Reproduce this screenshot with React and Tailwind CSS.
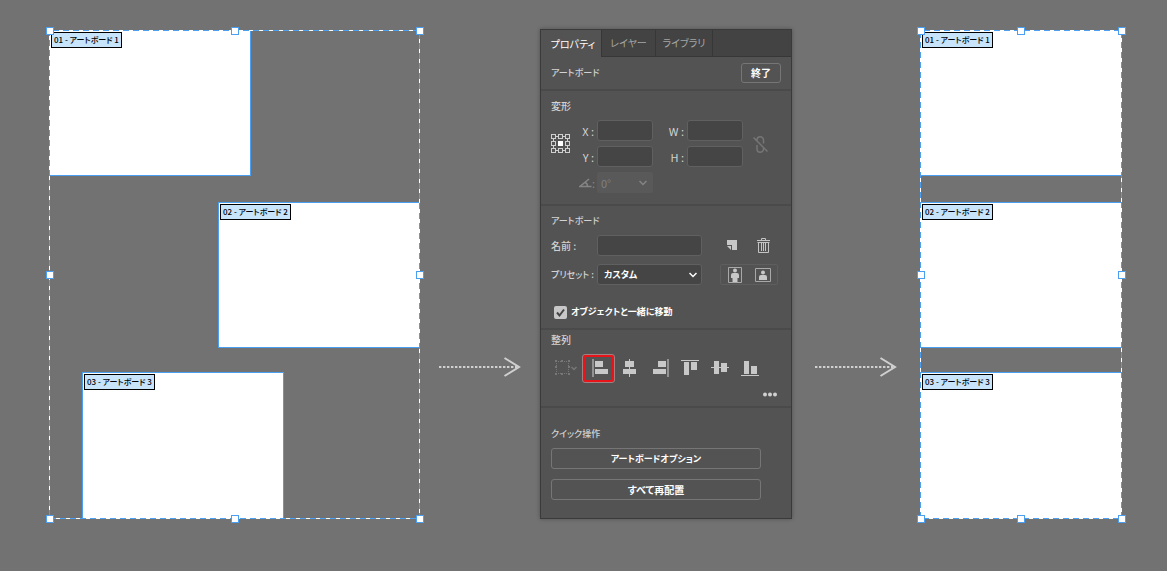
import React from "react";

const LEFT_BOARDS = [
  { label: "01 - アートボード 1", place: "left-0 top-0 h-[146px] w-[202px]", edge: "border-r border-b" },
  { label: "02 - アートボード 2", place: "right-0 top-[172px] h-[146px] w-[202px]", edge: "border-l border-y" },
  { label: "03 - アートボード 3", place: "left-[33px] top-[342px] h-[147px] w-[202px]", edge: "border-x border-t" },
];

const RIGHT_BOARDS = [
  { label: "01 - アートボード 1", place: "inset-x-0 top-0 h-[146px]", edge: "border-b" },
  { label: "02 - アートボード 2", place: "inset-x-0 top-[172px] h-[146px]", edge: "border-y" },
  { label: "03 - アートボード 3", place: "inset-x-0 top-[342px] h-[147px]", edge: "border-t" },
];

const HANDLES = [
  "-left-[3px] -top-[3px]",
  "left-1/2 -ml-1 -top-[3px]",
  "-right-1 -top-[3px]",
  "-left-[3px] top-1/2 -mt-1",
  "-right-1 top-1/2 -mt-1",
  "-left-[3px] -bottom-1",
  "left-1/2 -ml-1 -bottom-1",
  "-right-1 -bottom-1",
];

function Canvas({ boards }) {
  return (
    <div className="relative mt-px">
      {boards.map((b) => (
        <div key={b.label} className={`absolute bg-white border-[#4a9ff0] ${b.place} ${b.edge}`} />
      ))}
      <svg className="absolute inset-0 h-full w-full overflow-hidden" fill="none" strokeWidth="2">
        <rect width="100%" height="100%" stroke="#4a9ff0" />
        <rect width="100%" height="100%" stroke="#fff" strokeDasharray="4 6" />
      </svg>
      {boards.map((b) => (
        <div key={b.label} className={`absolute ${b.place}`}>
          <span className="absolute left-[2px] top-[2px] flex h-4 w-[71px] items-center justify-center whitespace-nowrap border border-black bg-[#c8e4fb] text-[8px] font-medium leading-none text-black">
            {b.label}
          </span>
        </div>
      ))}
      {HANDLES.map((h) => (
        <span key={h} className={`absolute size-2 border border-[#4a9ff0] bg-white ${h}`} />
      ))}
    </div>
  );
}

function Arrow() {
  return (
    <div className="flex justify-center pt-[328px]">
      <svg width="82" height="20" viewBox="0 0 82 20" fill="none" stroke="#d0d0d0" strokeWidth="2">
        <path d="M0 10H78" strokeDasharray="2.4 1.6" />
        <path d="M65.5 1 80 10 65.5 19" />
      </svg>
    </div>
  );
}

function Title({ kana, children }) {
  return (
    <h2 className={`font-medium leading-4 text-[#d2d2d2] ${kana ? "text-[9px]" : "text-[10px]"}`}>{children}</h2>
  );
}

function Field({ id, label }) {
  return (
    <div className="flex items-center">
      <label htmlFor={id} className="mr-[3px] text-[11px] leading-4 text-[#d2d2d2]">
        {label} :
      </label>
      <input
        id={id}
        type="text"
        className="h-[21px] w-14 rounded-[3px] border border-[#606060] bg-[#454545] px-1 text-[10px] text-white"
      />
    </div>
  );
}

function Chevron({ className }) {
  return (
    <svg width="8" height="6" viewBox="0 0 8 6" fill="none" stroke="currentColor" strokeWidth="1.5" className={className}>
      <path d="M.5 1 4 4.500 7.500 1" />
    </svg>
  );
}

function ReferencePoint() {
  return (
    <svg width="19" height="19" viewBox="0 0 19 19" fill="none" stroke="#cfcfcf">
      <path d="M5 2.500H7M12 2.500H14M5 16.500H7M12 16.500H14M2.500 5V7M2.500 12V14M16.500 5V7M16.500 12V14" />
      {[0.5, 7.5, 14.5].map((y) =>
        [0.5, 7.5, 14.5].map((x) =>
          x === 7.5 && y === 7.5 ? (
            <rect key="center" x="7.500" y="7.500" width="4" height="4" fill="#fff" stroke="#fff" />
          ) : (
            <rect key={`${x}-${y}`} x={x} y={y} width="4" height="4" />
          )
        )
      )}
    </svg>
  );
}

const ALIGN_BUTTONS = [
  {
    label: "左揃え",
    active: true,
    icon: (
      <>
        <path fill="#929292" d="M0 0h2v18H0z" />
        <path d="M3 2h8v6H3zM3 10h13v5H3z" />
      </>
    ),
  },
  {
    label: "水平方向中央揃え",
    icon: <path d="M8 0h1v18H8zM4 2h9v6H4zM2 10h13v5H2z" />,
  },
  {
    label: "右揃え",
    icon: (
      <>
        <path fill="#929292" d="M16 0h2v18h-2z" />
        <path d="M7 2h8v6H7zM2 10h13v5H2z" />
      </>
    ),
  },
  {
    label: "上揃え",
    icon: <path d="M0 1h18v1H0zM3 3h5v13H3zM10 3h6v8h-6z" />,
  },
  {
    label: "垂直方向中央揃え",
    icon: <path d="M0 8h18v1H0zM3 2h5v13H3zM10 4h6v9h-6z" />,
  },
  {
    label: "下揃え",
    icon: <path d="M0 16h18v1H0zM3 2h5v13H3zM10 7h6v8h-6z" />,
  },
];

function AlignTo() {
  return (
    <button aria-label="整列の基準" className="flex items-center text-[#777]">
      <svg width="23" height="16" viewBox="0 0 23 16" fill="none" stroke="currentColor">
        <path d="M3 1.500H12M3 13.500H12M1.500 3V12M13.500 3V12" strokeDasharray="1 1" />
        <path
          fill="currentColor"
          stroke="none"
          d="M0 0h2v2H0zM6 0h2v2H6zM13 0h2v2h-2zM0 6h2v2H0zM13 6h2v2h-2zM0 13h2v2H0zM6 13h2v2H6zM13 13h2v2h-2z"
        />
        <path d="M16.500 7 19 9.500 21.500 7" strokeWidth="1.500" />
      </svg>
    </button>
  );
}

function Panel() {
  return (
    <section className="border border-[#3a3a3a] bg-[#535353] shadow-[0_0_4px_rgba(0,0,0,0.3)]">
      <div role="tablist" className="flex h-[27px] bg-[#434343] text-[10px] leading-none text-[#a6a6a6]">
        <button role="tab" aria-selected="true" className="w-[61px] border-r border-[#373737] bg-[#535353] pl-1 text-white">
          プロパティ
        </button>
        <button role="tab" aria-selected="false" className="w-[54px] border-b border-r border-[#373737]">
          レイヤー
        </button>
        <button role="tab" aria-selected="false" className="w-[57px] border-b border-r border-[#373737]">
          ライブラリ
        </button>
        <div className="flex-1 border-b border-[#373737]" />
      </div>

      <div className="flex h-8 items-center justify-between px-[10px]">
        <Title kana>アートボード</Title>
        <button className="h-5 w-10 rounded-[3px] border border-[#767676] text-[10px] font-bold leading-none text-white">
          終了
        </button>
      </div>

      {/* 変形 */}
      <div className="h-[115px] border-t-2 border-[#4a4a4a] px-[10px] pt-[7px]">
        <Title>変形</Title>
        <div className="mt-[6px] flex items-start">
          <div className="mt-[14px] w-[19px]">
            <ReferencePoint />
          </div>
          <div className="flex w-[83px] flex-col items-end gap-[5px]">
            <Field id="x" label="X" />
            <Field id="y" label="Y" />
            <div className="flex items-center text-[#858585]">
              <label htmlFor="angle" className="mr-[2px] flex items-center text-[11px] leading-4">
                <svg width="13" height="10" viewBox="0 0 13 10" fill="none" stroke="currentColor" strokeWidth="1.500" aria-label="角度">
                  <path d="M10 1 1 8.500H12.500M6 4.500C8 5 8.500 6.500 8.500 8.500" />
                </svg>
                <span>:</span>
              </label>
              <div className="relative">
                <select
                  id="angle"
                  disabled
                  className="block h-[21px] w-14 appearance-none rounded-[2px] bg-[#595959] pl-1 text-[11px] leading-4 text-[#808080] opacity-100"
                >
                  <option>0°</option>
                </select>
                <Chevron className="pointer-events-none absolute right-[6px] top-2" />
              </div>
            </div>
          </div>
          <div className="flex w-[90px] flex-col items-end gap-[5px]">
            <Field id="w" label="W" />
            <Field id="h" label="H" />
          </div>
          <button aria-label="縦横比を固定" className="ml-[10px] mt-4 text-[#767676]">
            <svg width="15" height="17" viewBox="0 0 15 17" fill="none" stroke="currentColor" strokeWidth="1.500">
              <path d="M4 6V4a3.250 3.250 0 0 1 6.500 0v3.500M4 9v4a3.250 3.250 0 0 0 6.500 0v-1M.5 1.500 14.500 15.500" />
            </svg>
          </button>
        </div>
      </div>

      {/* アートボード */}
      <div className="h-[124px] border-t-2 border-[#4a4a4a] px-[10px] pt-[7px]">
        <Title kana>アートボード</Title>
        <div className="mt-[6px] flex items-center">
          <label htmlFor="name" className="w-[46px] whitespace-nowrap text-[10px] font-medium leading-4 text-[#d2d2d2]">
            名前 :
          </label>
          <input
            id="name"
            type="text"
            className="h-[21px] w-[105px] rounded-[3px] border border-[#606060] bg-[#454545] px-1 text-[10px] text-white"
          />
          <button aria-label="新規アートボード" className="ml-[25px]">
            <svg width="11" height="11" viewBox="0 0 11 11" fill="#c8c8c8">
              <path d="M0 0h10v10H5V5H0zM0 6h4v4z" />
            </svg>
          </button>
          <button aria-label="アートボードを削除" className="ml-[19px]">
            <svg width="13" height="15" viewBox="0 0 13 15" fill="none" stroke="#c4c4c4">
              <path d="M4.500 2V.5h4V2M0 2.500h13M1.500 4.500h10v10h-10zM4.500 5v8M6.500 5v8M8.500 5v8" />
              <path d="M.5 4.500h12" />
            </svg>
          </button>
        </div>
        <div className="mt-2 flex items-center">
          <label htmlFor="preset" className="w-[46px] whitespace-nowrap text-[9px] font-medium leading-4 text-[#d2d2d2]">
            プリセット :
          </label>
          <div className="relative">
            <select
              id="preset"
              className="block h-[21px] w-[105px] appearance-none rounded-[3px] border border-[#606060] bg-[#454545] pl-[6px] text-[9px] font-bold leading-4 text-white"
            >
              <option>カスタム</option>
            </select>
            <Chevron className="pointer-events-none absolute right-[5px] top-2 text-white" />
          </div>
          <div className="ml-[18px] flex h-[21px] w-[58px] items-center justify-around rounded-[2px] border border-[#5e5e5e]">
            <button aria-label="縦">
              <svg width="14" height="16" viewBox="0 0 14 16" fill="#c8c8c8">
                <path d="M.5.5h13v15H.5z" fill="none" stroke="#a8a8a8" />
                <circle cx="7" cy="3.500" r="2" />
                <path d="M5 6h4a2 2 0 0 1 2 2v3H9.500v4h-5v-4H3V8a2 2 0 0 1 2-2z" />
              </svg>
            </button>
            <button aria-label="横">
              <svg width="16" height="14" viewBox="0 0 16 14" fill="#c8c8c8">
                <path d="M.5.5h15v13H.5z" fill="none" stroke="#a8a8a8" />
                <circle cx="8" cy="4.500" r="2" />
                <path d="M6 7h4a2 2 0 0 1 2 2v3H4V9a2 2 0 0 1 2-2z" />
              </svg>
            </button>
          </div>
        </div>
        <label className="ml-[3px] mt-[19px] flex items-center gap-1 text-[9px] font-bold leading-4 text-white">
          <span className="relative size-[13px]">
            <input type="checkbox" defaultChecked className="block size-[13px] appearance-none rounded-[2px] bg-[#c8c8c8]" />
            <svg
              viewBox="0 0 13 13"
              fill="none"
              stroke="#454545"
              strokeWidth="2"
              className="pointer-events-none absolute inset-0 size-[13px]"
            >
              <path d="M3 6.500 5.500 9.500 10 3.500" />
            </svg>
          </span>
          オブジェクトと一緒に移動
        </label>
      </div>

      {/* 整列 */}
      <div className="h-[78px] border-t-2 border-[#4a4a4a] px-[10px] pt-[2px]">
        <Title>整列</Title>
        <div className="mt-[6px] flex items-center">
          <div className="w-[31px] pb-[2px] pl-1">
            <AlignTo />
          </div>
          <div className="flex flex-1 items-center">
            {ALIGN_BUTTONS.map((b) => (
              <button
                key={b.label}
                aria-label={b.label}
                className={
                  b.active
                    ? "flex h-[29px] w-[33px] items-center justify-center rounded-[3px] border border-[#a08080] pb-[2px] pl-1 ring-2 ring-inset ring-[#e8141a]"
                    : "flex w-[30px] items-center justify-center pb-[2px]"
                }
              >
                <svg width="18" height="18" viewBox="0 0 18 18" fill="#c8c8c8">
                  {b.icon}
                </svg>
              </button>
            ))}
          </div>
        </div>
        <div className="flex justify-end pr-1">
          <button aria-label="詳細オプション" className="mt-[9px]">
            <svg width="14" height="5" viewBox="0 0 14 5" fill="#d0d0d0">
              <circle cx="2" cy="2.500" r="2" />
              <circle cx="7" cy="2.500" r="2" />
              <circle cx="12" cy="2.500" r="2" />
            </svg>
          </button>
        </div>
      </div>

      {/* クイック操作 */}
      <div className="border-t-2 border-[#4a4a4a] pb-[18px] pl-[10px] pr-[30px] pt-[18px]">
        <Title kana>クイック操作</Title>
        <div className="mt-[6px] flex flex-col gap-[10px]">
          <button className="h-[21px] rounded-[3px] border border-[#767676] text-[9px] font-bold leading-none text-white">
            アートボードオプション
          </button>
          <button className="h-[21px] rounded-[3px] border border-[#767676] text-[10px] font-bold leading-none text-white">
            すべて再配置
          </button>
        </div>
      </div>
    </section>
  );
}

export default function App() {
  return (
    <main className="grid min-h-screen grid-cols-[371fr_120px_252px_128px_202fr] content-start bg-[#727272] pb-[52px] pl-[49px] pr-[45px] pt-[29px] font-['Noto_Sans_CJK_JP',sans-serif] [font-feature-settings:'palt']">
      <Canvas boards={LEFT_BOARDS} />
      <Arrow />
      <Panel />
      <Arrow />
      <Canvas boards={RIGHT_BOARDS} />
    </main>
  );
}
